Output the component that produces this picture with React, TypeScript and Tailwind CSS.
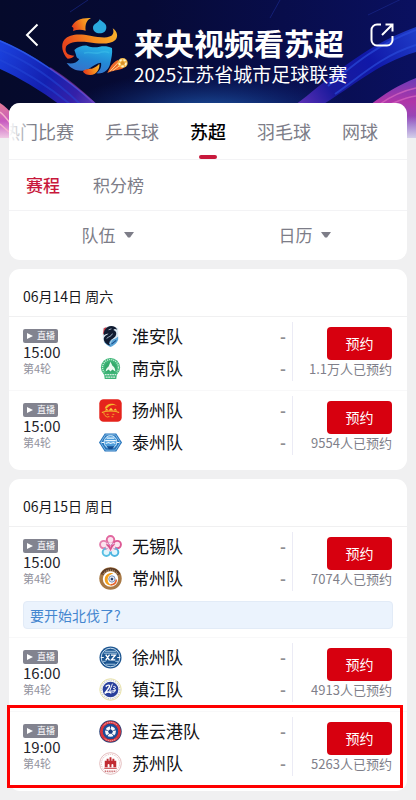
import React, { useState } from 'react';

interface Team {
  name: string;
  crest: React.ReactNode;
}

interface Match {
  time: string;
  round: string;
  teams: Team[];
  booked: string;
  note?: string;
  marked?: boolean;
}

interface Day {
  date: string;
  matches: Match[];
}

const Crest = ({ children }: { children: React.ReactNode }) => (
  <svg viewBox="0 0 24 24" className="size-[23px] shrink-0" fill="none" aria-hidden="true">
    {children}
  </svg>
);

const HuaianCrest = () => (
  <Crest>
    <path d="M4 3 12 .8 20 3v11c0 4-4 7-8 9-4-2-8-5-8-9Z" fill="#dce8f1" />
    <path d="M12 15c3 1 5-1 8-3v3c-1 4-5 6.500-8 8-3-1.500-5-3-6.500-5Z" fill="#5aa5d8" />
    <path d="M5 3.500 8 2 6 8l-2 2Z" fill="#d5454e" />
    <path
      d="M9 2c4-2 9-.5 10 3-2-1-3-1-4 .2 3 1 4 4 2 6.800-2 2.500-5 3-6 5.500-.5 1.500 0 3 1 4-4-1-7-4-7-7 0-3 3-4 5-5.500C8 9 6 9.500 5 11c-.5-4 1-7 4-9Z"
      fill="#101b31"
    />
    <path d="M8 14c2-2 5-2 6-5M14 15l-3 5M10 5l3-1" stroke="#c8dbe8" strokeWidth=".8" />
    <path d="m13 20 5-4" stroke="#1b4e8b" strokeWidth="1.200" />
  </Crest>
);

const NanjingCrest = () => (
  <Crest>
    <circle cx="12" cy="11" r="10" fill="#3eb577" />
    <circle cx="12" cy="11" r="8.300" stroke="#c9efd9" strokeWidth="1.400" strokeDasharray="1.200 1" />
    <circle cx="12" cy="11.500" r="6.300" fill="#35a96c" />
    <path d="M7 15c0-3 2-4 3-5l2-5 2 4c2 1 3 3 3 6l-3-2-2 2-2-2Z" fill="#eefaf2" />
    <path d="M5 16h14l-1 7H6Z" fill="#3eb577" />
    <path d="M6 18.500h12M7 21h10" stroke="#fff" strokeWidth="1" strokeDasharray="2 .6" />
  </Crest>
);

const YangzhouCrest = () => (
  <Crest>
    <rect x=".3" y=".3" width="23.400" height="23.400" rx="4.500" fill="#e5231c" />
    <path d="M6 10c1-5 8-7 13-3-5-2-9 0-11 3" fill="#f6b72d" />
    <path d="M3 14c4-2 14-2 18 0" stroke="#f6c431" strokeWidth="1.200" />
    <path d="m6 12 2-2 2 2Zm4 0 2.500-3 2.500 3Zm5 0 2-2 2 2Z" fill="#f9cf3c" />
    <path d="M5 14c0 3 2 4 4 5M8 16h2m4 0h2M9 18.500h2m2 0h2" stroke="#f3a92a" strokeWidth="1" />
  </Crest>
);

const TaizhouCrest = () => (
  <Crest>
    <path d="M6 2.500h12l6 9.500-6 9.500H6L0 12Z" fill="#2473bb" />
    <path d="M6.800 4h10.400l5 8-5 8H6.800l-5-8Z" stroke="#9ccbee" strokeWidth=".8" />
    <circle cx="12" cy="11.500" r="6.700" fill="#4e9ddb" stroke="#d5ecfb" strokeWidth="1" />
    <path d="M6.500 10h11M8 7.500h8M7 13l3-1 2 1 3-1 2 1" stroke="#e9f6ff" strokeWidth="1.200" />
    <path d="M8 16h8l-2 3h-4Z" fill="#164e92" />
    <path d="M2.500 12h3m13 0h3" stroke="#fff" strokeWidth="1" />
  </Crest>
);

const WuxiCrest = () => (
  <Crest>
    <g strokeWidth="2">
      <circle cx="12" cy="5" r="3.900" stroke="#e2679f" fill="#fbe3ee" />
      <circle cx="5" cy="10" r="3.900" stroke="#e57fae" fill="#fbe3ee" />
      <circle cx="19" cy="10" r="3.900" stroke="#dd5995" fill="#fbe3ee" />
      <circle cx="7.700" cy="18" r="3.900" stroke="#58bfe3" fill="#e2f5fc" />
      <circle cx="16.300" cy="18" r="3.900" stroke="#4cb4e0" fill="#e2f5fc" />
    </g>
    <circle cx="12" cy="12.500" r="5" fill="#f7e0ee" />
    <path d="M7 10c4-1 5 1 5 4 0-3 1-5 5-4-2 1-3 3-5 7-1-3-3-5-5-7Z" fill="#d9528f" />
    <path d="m9 8 3 3 3-3M6 15l3-1m6 0 3 1" stroke="#c984bd" strokeWidth="1" />
  </Crest>
);

const ChangzhouCrest = () => (
  <Crest>
    <circle cx="12" cy="12" r="11.700" fill="#a87945" />
    <path d="M3 8a10 10 0 0 1 18 0" stroke="#5c3b25" strokeWidth="3" />
    <path d="M4 7.500a9.500 9.500 0 0 1 16 0" stroke="#dcc09a" strokeWidth="1" strokeDasharray="1.200 1" />
    <circle cx="12" cy="12.500" r="8" fill="#fff" />
    <path d="M15 6.500c-5-1-9 2-9 6.500s4 7 8 6c-3-.5-5-3-5-6 0-3 2-5 6-6.500Z" fill="#f3a01c" />
    <circle cx="13.500" cy="12.500" r="3.300" fill="#e9edf5" stroke="#5673a5" strokeWidth=".8" />
    <path d="m13.500 11 1.500 1.200-.6 1.600h-1.800l-.6-1.600Z" fill="#25406f" />
    <path d="M12 18.500c4 0 6-2 6-5.500" stroke="#e5622b" strokeWidth="1.700" />
  </Crest>
);

const XuzhouCrest = () => (
  <Crest>
    <circle cx="12" cy="12" r="11.500" fill="#1c5590" />
    <circle cx="12" cy="12" r="9.700" stroke="#c9dff0" strokeWidth="1" />
    <path d="M6 5.500h12M5 7.500h14M7 19h10M4 16h3m10 0h3" stroke="#a9cbe5" strokeWidth="1" />
    <path d="m7 9 4 6M11 9l-4 6M12.500 9.500H17L13 14.500h4" stroke="#fff" strokeWidth="1.500" />
    <path d="M2 12h3m14 0h3" stroke="#fff" strokeWidth="1" />
  </Crest>
);

const ZhenjiangCrest = () => (
  <Crest>
    <circle cx="12" cy="12" r="11.200" fill="#fbfbf3" stroke="#e5dfa4" strokeWidth="1" />
    <circle cx="12" cy="12" r="9.700" stroke="#c5c5d8" strokeWidth="1.200" strokeDasharray="1.200 1.200" />
    <circle cx="12" cy="12" r="8.200" fill="#293f9c" />
    <path d="M7 9c2-2 4-2 4-.5S8 13 6 16c3-2 5-2 7 0" stroke="#fff" strokeWidth="1.500" />
    <path d="m14 6-3 8 6-1M15 9c3-1 3 2 0 2 3 0 3 4-1 4" stroke="#fff" strokeWidth="1" />
  </Crest>
);

const LianyungangCrest = () => (
  <Crest>
    <circle cx="12" cy="12" r="11.700" fill="#263f76" />
    <circle cx="12" cy="12" r="9.500" stroke="#d8343c" strokeWidth="3" />
    <path d="M5 5.500a9.500 9.500 0 0 1 14 0M6 19.500a9.500 9.500 0 0 0 12 0" stroke="#f2c5c7" strokeWidth="1" strokeDasharray="1.200 .8" />
    <circle cx="12" cy="12" r="7.900" fill="#1d4f9b" />
    <circle cx="12" cy="12" r="5.600" fill="#f8fafc" />
    <path d="m12 9.500 2.600 1.900-1 3h-3.200l-1-3Z" fill="#183e83" />
    <path d="M12 6v3m3 2 3-1m-4 4.700 2 2.300m-6-2.300-2 2.300m1-6-3-1" stroke="#183e83" strokeWidth="1" />
  </Crest>
);

const SuzhouCrest = () => (
  <Crest>
    <circle cx="12" cy="12" r="11.300" fill="#fff" stroke="#dca8aa" strokeWidth=".8" />
    <circle cx="12" cy="12" r="9.500" stroke="#dfb1b2" strokeWidth="1" strokeDasharray="1 1" />
    <path d="M6 9h2V7h2v2h1V5.500h2V9h1V7h2v2h2v7h-3v-2.500a1 1 0 0 0-2 0V16h-2v-2.500a1 1 0 0 0-2 0V16H6Z" fill="#c12b32" />
    <path d="M5.500 17h13" stroke="#c12b32" strokeWidth="1" />
    <path d="M6 20h12" stroke="#ce7478" strokeWidth="1.500" strokeDasharray="1.500 .8" />
  </Crest>
);

const days: Day[] = [
  {
    date: '06月14日 周六',
    matches: [
      {
        time: '15:00',
        round: '第4轮',
        teams: [
          { name: '淮安队', crest: <HuaianCrest /> },
          { name: '南京队', crest: <NanjingCrest /> },
        ],
        booked: '1.1万',
      },
      {
        time: '15:00',
        round: '第4轮',
        teams: [
          { name: '扬州队', crest: <YangzhouCrest /> },
          { name: '泰州队', crest: <TaizhouCrest /> },
        ],
        booked: '9554',
      },
    ],
  },
  {
    date: '06月15日 周日',
    matches: [
      {
        time: '15:00',
        round: '第4轮',
        teams: [
          { name: '无锡队', crest: <WuxiCrest /> },
          { name: '常州队', crest: <ChangzhouCrest /> },
        ],
        booked: '7074',
        note: '要开始北伐了?',
      },
      {
        time: '16:00',
        round: '第4轮',
        teams: [
          { name: '徐州队', crest: <XuzhouCrest /> },
          { name: '镇江队', crest: <ZhenjiangCrest /> },
        ],
        booked: '4913',
      },
      {
        time: '19:00',
        round: '第4轮',
        teams: [
          { name: '连云港队', crest: <LianyungangCrest /> },
          { name: '苏州队', crest: <SuzhouCrest /> },
        ],
        booked: '5263',
        marked: true,
      },
    ],
  },
];

const sports = ['热门比赛', '乒乓球', '苏超', '羽毛球', '网球'];
const views = ['赛程', '积分榜'];
const filters = ['队伍', '日历'];

const Backdrop = () => (
  <svg
    viewBox="0 0 416 138"
    preserveAspectRatio="xMidYMin slice"
    className="absolute inset-x-0 top-0 h-[138px] w-full"
    fill="none"
    aria-hidden="true"
  >
    <defs>
      <linearGradient id="night" x1="0" y1="0" x2="1" y2="0">
        <stop offset="0" stopColor="#050a2b" />
        <stop offset=".35" stopColor="#060a35" />
        <stop offset="1" stopColor="#0a1060" />
      </linearGradient>
      <radialGradient id="glow">
        <stop offset="0" stopColor="#2468b8" />
        <stop offset="1" stopColor="#0c2a80" stopOpacity="0" />
      </radialGradient>
      <linearGradient id="leftBeam" x1="0" y1="50" x2="95" y2="105" gradientUnits="userSpaceOnUse">
        <stop offset="0" stopColor="#1a40dc" />
        <stop offset=".5" stopColor="#1420b0" />
        <stop offset=".8" stopColor="#3520a8" />
        <stop offset="1" stopColor="#5a3cb8" />
      </linearGradient>
      <linearGradient id="rightBeam" x1="300" y1="105" x2="416" y2="30" gradientUnits="userSpaceOnUse">
        <stop offset="0" stopColor="#5a2fb5" />
        <stop offset=".25" stopColor="#1a1a9c" />
        <stop offset=".6" stopColor="#1018a8" />
        <stop offset="1" stopColor="#1f3cc8" />
      </linearGradient>
      <linearGradient id="pinkBeam" x1="0" y1="78" x2="0" y2="125" gradientUnits="userSpaceOnUse">
        <stop offset="0" stopColor="#6a3ab8" />
        <stop offset=".5" stopColor="#b035a8" />
        <stop offset="1" stopColor="#8a50c0" />
      </linearGradient>
      <linearGradient id="leftEdge" x1="0" y1="104" x2="0" y2="138" gradientUnits="userSpaceOnUse">
        <stop offset="0" stopColor="#e07a98" />
        <stop offset=".5" stopColor="#c85ac0" />
        <stop offset="1" stopColor="#f0c8e4" />
      </linearGradient>
      <linearGradient id="fade" x1="0" y1="116" x2="0" y2="138" gradientUnits="userSpaceOnUse">
        <stop offset="0" stopColor="#d4d0ea" stopOpacity="0" />
        <stop offset="1" stopColor="#d4d0ea" />
      </linearGradient>
    </defs>
    <rect width="416" height="138" fill="url(#night)" />
    <ellipse cx="210" cy="118" rx="150" ry="48" fill="url(#glow)" />
    <path d="M0 40c30 12 68 38 98 65H60C40 90 20 78 0 69Z" fill="url(#leftBeam)" />
    <path d="M0 41c32 13 68 39 94 62" stroke="#2f5ee8" strokeWidth="1.500" opacity=".8" />
    <path d="M0 50c30 12 58 33 80 54M0 60c26 12 50 28 70 44" stroke="#2448d8" strokeWidth="2" opacity=".5" />
    <path d="M50 68c17 11 30 21 44 35" stroke="#8a3ab0" strokeWidth="2" opacity=".6" />
    <path d="M295 105c30-22 65-58 121-78v25c-40 12-62 34-94 53Z" fill="url(#rightBeam)" />
    <path d="M328 86c26-22 50-42 88-56M335 94c26-18 46-38 81-49" stroke="#2a4ad8" strokeWidth="2" opacity=".7" />
    <path d="M370 105c14-11 28-20 46-27v60h-16v-32Z" fill="url(#pinkBeam)" />
    <path d="M380 104c10-7 22-13 36-16M386 106c10-4 20-9 30-10" stroke="#d868c0" strokeWidth="1.500" opacity=".7" />
    <path d="M368 15 416-8M70 12l18-12M270 18l10-18" stroke="#1c2c92" strokeWidth="1" opacity=".6" />
    <path d="M0 103c5 3 9 7 14 14v21H0Z" fill="url(#leftEdge)" />
    <path d="M0 112c4 3 7 7 10 11M0 124l9 8" stroke="#f5b0cc" strokeWidth="1.500" />
    <rect y="116" width="14" height="22" x="402" fill="url(#fade)" />
  </svg>
);

const LeagueLogo = () => (
  <svg viewBox="180 45 210 189" className="h-[63px] w-[70px] shrink-0" fill="none" role="img" aria-label="江苏省城市足球联赛">
    <defs>
      <linearGradient id="flame" x1="0" y1=".3" x2="1" y2="0">
        <stop offset="0" stopColor="#e8461c" />
        <stop offset=".5" stopColor="#f58a1e" />
        <stop offset="1" stopColor="#f9b62e" />
      </linearGradient>
      <linearGradient id="wave" x1=".7" y1="0" x2=".3" y2="1">
        <stop offset="0" stopColor="#27b4e6" />
        <stop offset=".5" stopColor="#2388d6" />
        <stop offset="1" stopColor="#3a6ec8" />
      </linearGradient>
    </defs>
    <path d="M215 80c8-17 25-27 58-26-14 7-18 20-16 38-12-4-26-4-38 1 2-7 3-11-4-13Z" fill="url(#flame)" />
    <path d="M299 58c7 8 21 12 20 25-1 11-9 17-20 17s-20-7-20-17c0-12 15-12 20-25Z" fill="#2aa9df" />
    <path
      d="M223 150c10-9 24-14 38-13 14 6 26 6 38 3 14-2 26-1 37 4 2 16-2 31-5 45-4 20-18 33-42 31 12-9 16-20 14-32-14 2-24 10-36 18-20 11-50 8-67-17 16 4 30 0 38-12-6-2-10-6-10-13-2-5-3-10-5-14Z"
      fill="url(#wave)"
    />
    <path d="M252 160c16-8 28 4 46-2 12-4 20-4 30 0" stroke="#45c8ee" strokeWidth="5" opacity=".4" />
    <path
      d="M338 85c15 10 17 26 8 35-15 14-47 12-81 7-34-4-66 0-68 18-2 14 8 22 26 22-4 6-12 9-20 9-16-15-22-43-10-57 16-19 48-18 78-12 31 6 60 9 67-4 3-5 3-12 0-18Z"
      fill="url(#flame)"
    />
    <path d="M249 215c5-10 20-6 30-10 8-4 15-9 19-14 2 16-8 33-27 34-10 0-18-4-22-10Z" fill="url(#flame)" />
    <path d="M322 219c7-14 13-30 31-39l17 25c-15 6-28 6-48 14Z" fill="#ee6a2a" />
    <path d="m330 214 25-27m-17 25 25-18" stroke="#ffd38a" strokeWidth="3" />
    <circle cx="368" cy="189" r="15" fill="#f4b848" />
    <circle cx="368" cy="189" r="10" stroke="#fff4cc" strokeWidth="5" strokeDasharray="7 5" />
    <path d="m368 183 6 5-2 6h-8l-2-6Z" fill="#d8902a" />
  </svg>
);

const MatchRow = ({ match }: { match: Match }) => (
  <li className="relative border-t border-[#f8f8f9] first:border-[#f0f0f1]">
    <div className="flex h-[73px] pl-[14px] pr-[15px]">
      <div className="w-[76px] pt-3">
        <div className="flex h-[14px] w-[35px] items-center gap-1 rounded-[2px] bg-[#82838f] pl-1 text-[9px] leading-[14px] text-white">
          <svg viewBox="0 0 6 6" className="size-[6px]" aria-hidden="true">
            <path d="M0 0 6 3 0 6Z" fill="#fff" />
          </svg>
          直播
        </div>
        <div className="text-[15px] leading-[18px] text-[#23232b]">{match.time}</div>
        <div className="text-[11px] leading-[14px] text-[#92929d]">{match.round}</div>
      </div>
      <div className="flex-1 pt-[3px]">
        {match.teams.map((team) => (
          <div key={team.name} className="flex h-8 items-center gap-[10px]">
            {team.crest}
            <span className="flex-1 text-[17px] leading-8 text-[#121216]">{team.name}</span>
            <span className="pr-[6px] text-base font-bold text-[#8e8e92]">-</span>
          </div>
        ))}
      </div>
      <div className="mt-[5px] h-[59px] w-px bg-[#ebebf5]" />
      <div className="flex w-[99px] flex-col items-end pt-[10px]">
        <button type="button" className="h-[33px] w-[65px] rounded-[4px] bg-[#d7000f] pb-[2px] text-sm text-white">
          预约
        </button>
        <span className="whitespace-nowrap text-[13px] leading-[18px] text-[#7f7f8a]">{match.booked}人已预约</span>
      </div>
    </div>
    {match.note && (
      <div className="px-[14px] pb-2 pt-px">
        <a
          href="#note"
          className="block h-7 rounded-[4px] border border-[#e2ebf7] bg-[#ebf3fd] px-[6px] text-sm leading-[26px] text-[#4486cf]"
        >
          {match.note}
        </a>
      </div>
    )}
    {match.marked && (
      <div className="pointer-events-none absolute -bottom-[3px] -left-[2px] -top-[7px] right-1 border-3 border-[#fe0000]" />
    )}
  </li>
);

const App = () => {
  const [sport, setSport] = useState('苏超');
  const [view, setView] = useState('赛程');

  return (
    <div className="relative min-h-screen overflow-hidden bg-[#f0f0f1] font-['Noto_Sans_CJK_SC',sans-serif]">
      <Backdrop />
      <div className="relative">
        <header className="flex h-[103px] items-start pl-[25px] pr-[22px] pt-[15px] text-white">
          <button type="button" aria-label="返回" className="mt-2 w-[35px] shrink-0">
            <svg viewBox="0 0 14 24" className="h-6 w-[14px]" fill="none" aria-hidden="true">
              <path d="M12.500 1.500 2 12l10.500 10.500" stroke="#fff" strokeWidth="2" />
            </svg>
          </button>
          <LeagueLogo />
          <div className="flex-1 whitespace-nowrap pl-1 pt-[5px]">
            <h1 className="text-[30px] font-bold leading-[44px]">来央视频看苏超</h1>
            <p className="text-[19px] leading-5">2025江苏省城市足球联赛</p>
          </div>
          <button type="button" aria-label="分享" className="mt-2 shrink-0">
            <svg viewBox="0 0 24 24" className="size-6" fill="none" stroke="#fff" strokeWidth="2" aria-hidden="true">
              <path d="M11 1.500H7a5.500 5.500 0 0 0-5.500 5.500v10A5.500 5.500 0 0 0 7 22.500h10a5.500 5.500 0 0 0 5.500-5.500v-4" />
              <path d="M12 12 22.500 1.500M15.500 1.500h7v7" />
            </svg>
          </button>
        </header>

        <main className="flex flex-col gap-[9px] px-[9px] pb-[9px]">
          <section className="overflow-hidden rounded-[11px] bg-white">
            <nav className="relative overflow-hidden">
              <div className="-ml-[7px] flex h-14 gap-[31px]">
                {sports.map((s) => (
                  <button
                    key={s}
                    type="button"
                    onClick={() => setSport(s)}
                    className={`relative shrink-0 text-lg ${s === sport ? 'font-medium text-black' : 'text-[#7d7d88]'}`}
                  >
                    {s}
                    {s === sport && (
                      <span className="absolute bottom-0 left-1/2 h-1 w-[18px] -translate-x-1/2 rounded-full bg-[#c8193c]" />
                    )}
                  </button>
                ))}
              </div>
              <div className="pointer-events-none absolute inset-y-0 left-0 w-6 bg-linear-to-r from-white to-white/0" />
            </nav>
            <div className="flex h-[51px] gap-[33px] border-t border-[#f3f3f5] px-[17px]">
              {views.map((v) => (
                <button
                  key={v}
                  type="button"
                  onClick={() => setView(v)}
                  className={`text-[17px] ${v === view ? 'font-medium text-[#c8193c]' : 'text-[#7d7d88]'}`}
                >
                  {v}
                </button>
              ))}
            </div>
            <div className="grid h-[50px] grid-cols-2 border-t border-[#f3f3f5] pr-1 text-[#7d7d88]">
              {filters.map((f) => (
                <label key={f} className="flex items-center justify-center gap-2 pb-[2px]">
                  <select aria-label={f} className="appearance-none bg-transparent text-[17px]">
                    <option>{f}</option>
                  </select>
                  <svg viewBox="0 0 10 6" className="h-[6px] w-[10px]" aria-hidden="true">
                    <path d="M0 0h10L6 5.500H4Z" fill="#7d7d88" />
                  </svg>
                </label>
              ))}
            </div>
          </section>

          {days.map((day) => (
            <section key={day.date} className="rounded-[11px] bg-white pb-[6px]">
              <h2 className="h-[47px] px-[14px] pt-[17px] text-sm leading-5 text-[#18181c]">{day.date}</h2>
              <ul>
                {day.matches.map((match) => (
                  <MatchRow key={match.teams[0].name} match={match} />
                ))}
              </ul>
            </section>
          ))}
        </main>
      </div>
    </div>
  );
};

export default App;
